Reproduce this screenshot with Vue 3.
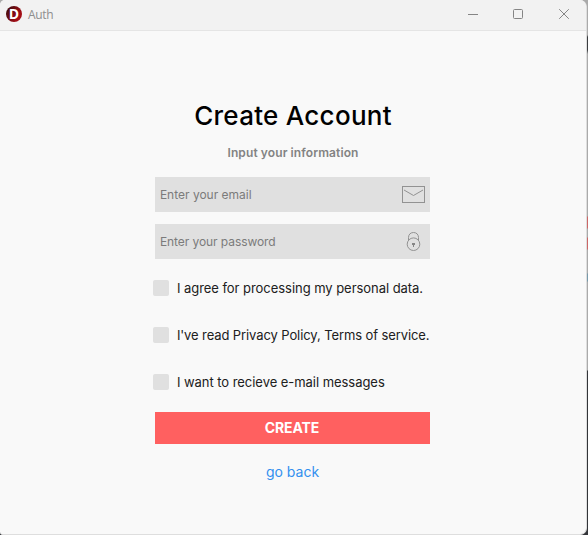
<script setup>
import { ref } from 'vue'

const email = ref('')
const password = ref('')
const agreements = ref([
  { label: 'I agree for processing my personal data.', checked: false, kind: 'agree' },
  { label: "I've read Privacy Policy, Terms of service.", checked: false, kind: 'policy' },
  { label: 'I want to recieve e-mail messages', checked: false, kind: 'mail' },
])
</script>

<template>
  <div class="desktop">
    <div class="window">
      <header class="titlebar">
        <span class="app-icon">D</span>
        <span class="app-name">Auth</span>
        <div class="controls">
          <svg width="12" height="12" viewBox="0 0 12 12"><path d="M2 6.5H12" /></svg>
          <svg width="12" height="12" viewBox="0 0 12 12"><rect x="1.5" y="1.5" width="9" height="9" rx="1" /></svg>
          <svg width="12" height="12" viewBox="0 0 12 12"><path d="M1.2 1.2L10.8 10.8M10.8 1.2L1.2 10.8" /></svg>
        </div>
      </header>
      <main class="content">
        <h1>Create Account</h1>
        <p class="subtitle">Input your information</p>
        <form class="form" @submit.prevent>
          <label class="field">
            <input v-model="email" class="email" type="email" placeholder="Enter your email" />
            <svg class="envelope" width="24" height="18" viewBox="0 0 24 18">
              <rect x="0.5" y="0.5" width="22" height="16" />
              <path d="M2 4L11.5 9.5L21 4" />
            </svg>
          </label>
          <label class="field">
            <input v-model="password" class="password" type="password" placeholder="Enter your password" />
            <svg class="lock" width="16" height="19" viewBox="0 0 16 19">
              <circle cx="7.5" cy="12.2" r="6.3" />
              <path d="M2.5 8.4V5.5C2.5 2.5 4.5 .5 7.5 .5S12.5 2.5 12.5 5.5V8.4" />
              <path class="keyhole" d="M6 11H9V13H8V15H7V13H6Z" />
            </svg>
          </label>
          <div class="agreements">
            <label v-for="item in agreements" :key="item.kind" class="agreement">
              <input v-model="item.checked" type="checkbox" />
              <span :class="item.kind">{{ item.label }}</span>
            </label>
          </div>
          <button class="create" type="submit"><span>CREATE</span></button>
          <a class="back" href="#">go back</a>
        </form>
      </main>
    </div>
  </div>
</template>

<style>
body { margin: 0; overflow: hidden; }
</style>

<style scoped>
.desktop {
  box-sizing: border-box;
  width: 588px;
  height: 535px;
  padding-right: 1px;
  font-family: Inter, "Liberation Sans", sans-serif;
  background: linear-gradient(#aaa 0 35px, #3b3d40 37px 50px, #aaa 54px 216px, #c66 217px 228px, #aaa 229px 237px, #c66 238px 249px, #aaa 250px 273px, #79a 274px 281px, #aaa 282px 370px, #333539 371px);
}
.window {
  box-sizing: border-box;
  height: 535px;
  display: flex;
  flex-direction: column;
  border-right: 1px solid #dedede;
  border-bottom: 1px solid #dedede;
  border-radius: 5px 7px 7px 3px;
  overflow: hidden;
  background: #f9f9f9;
}
.titlebar {
  box-sizing: border-box;
  flex: none;
  height: 31px;
  display: flex;
  align-items: center;
  padding: 0 16px 2px 6px;
  border-bottom: 1px solid #e5e5e5;
  background: #f2f2f2;
  color: #8e8e8e;
}
.app-icon {
  width: 16px;
  height: 16px;
  border-radius: 50%;
  background: linear-gradient(120deg, #4a0b0e 15%, #a30e17 75%);
  color: #fff;
  font: bold 14px/16px "Open Sans", sans-serif;
  text-align: center;
}
.app-name {
  margin: 2px 0 0 6px;
  font: 12px/16px "Open Sans", sans-serif;
  letter-spacing: -0.3px;
}
.controls { display: flex; gap: 34px; margin-left: auto; }
.controls svg { display: block; stroke: #858585; fill: none; stroke-width: 1; }
.content { display: flex; flex-direction: column; align-items: center; padding-top: 69px; }
h1 {
  margin: 0;
  font-size: 26px;
  line-height: 32px;
  font-weight: 500;
  letter-spacing: 0.28px;
  color: #000;
}
.subtitle {
  margin: 13px 0 0;
  font-size: 12px;
  line-height: 16px;
  font-weight: 600;
  letter-spacing: 0.1px;
  color: #838383;
}
.form { width: 275px; margin: 16px 0 0 -2px; display: flex; flex-direction: column; }
.field {
  box-sizing: border-box;
  height: 35px;
  margin-bottom: 12px;
  display: flex;
  align-items: center;
  padding: 0 4px 0 5px;
  background: #e0e0e0;
}
.field input {
  flex: 1;
  min-width: 0;
  padding: 0;
  border: 0;
  outline: none;
  background: transparent;
  font: 12px/16px Inter, sans-serif;
  text-indent: 0.4px;
  color: #333;
}
.field input.password { letter-spacing: -0.07px; }
.field input::placeholder { color: #7b7b7b; opacity: 1; }
.field svg { display: block; fill: none; stroke: #929292; }
.lock { margin-right: 4px; }
.field .keyhole { fill: #858585; stroke: none; }
.agreements { display: flex; flex-direction: column; gap: 31px; margin: 9px 0 0 -2px; }
.agreement { display: flex; align-items: center; gap: 8px; height: 16px; }
.agreement input { flex: none; appearance: none; width: 16px; height: 16px; margin: 0; border-radius: 2px; background: #e0e0e0; }
.agreement span { padding-left: 0.4px; font-size: 13px; line-height: 16px; letter-spacing: -0.045px; color: #202020; white-space: nowrap; }
.agreement .policy { letter-spacing: -0.1px; }
.create {
  height: 32px;
  margin: 22px 0 0;
  padding: 0;
  border: 0;
  background: #ff6060;
  color: #fff;
  font: 700 14px/32px Inter, sans-serif;
  letter-spacing: -0.1px;
}
.back { align-self: center; margin: 19px 0 0 1px; font-size: 14px; line-height: 18px; color: #3390ef; text-decoration: none; }
</style>
